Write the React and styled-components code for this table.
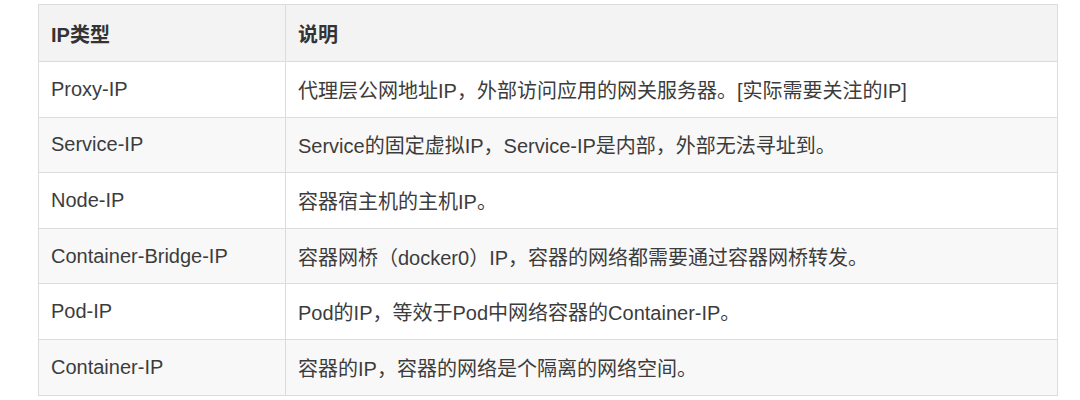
import React from "react";
import styled, { createGlobalStyle } from "styled-components";

const GlobalStyle = createGlobalStyle`
  body {
    margin: 0;
    background: #ffffff;
    font-family: "Liberation Sans", "Noto Sans CJK SC", sans-serif;
  }
`;

const Page = styled.div`
  padding: 4px 0 0 38px;
`;

const Table = styled.table`
  width: 1020px;
  border-collapse: collapse;
  font-size: 20px;
  color: #3c3c3c;
`;

const Th = styled.th`
  height: 56px;
  padding: 0 12px;
  text-align: left;
  font-weight: bold;
  color: #333;
  background-color: #f3f3f3;
  border: 1px solid #dcdcdc;
  width: ${(p) => p.width || "auto"};
`;

const Row = styled.tr`
  background-color: ${(p) => (p.striped ? "#f8f8f8" : "#ffffff")};
`;

const Td = styled.td`
  height: 54.6px;
  padding: 0 12px;
  border: 1px solid #dcdcdc;
`;

const rows = [
  ["Proxy-IP", "代理层公网地址IP，外部访问应用的网关服务器。[实际需要关注的IP]"],
  ["Service-IP", "Service的固定虚拟IP，Service-IP是内部，外部无法寻址到。"],
  ["Node-IP", "容器宿主机的主机IP。"],
  ["Container-Bridge-IP", "容器网桥（docker0）IP，容器的网络都需要通过容器网桥转发。"],
  ["Pod-IP", "Pod的IP，等效于Pod中网络容器的Container-IP。"],
  ["Container-IP", "容器的IP，容器的网络是个隔离的网络空间。"],
];

const App = () => {
  return (
    <Page>
      <GlobalStyle />
      <Table>
        <thead>
          <tr>
            <Th width="222px">IP类型</Th>
            <Th>说明</Th>
          </tr>
        </thead>
        <tbody>
          {rows.map(([name, desc], i) => (
            <Row key={name} striped={i % 2 === 1}>
              <Td>{name}</Td>
              <Td>{desc}</Td>
            </Row>
          ))}
        </tbody>
      </Table>
    </Page>
  );
};

export default App;
